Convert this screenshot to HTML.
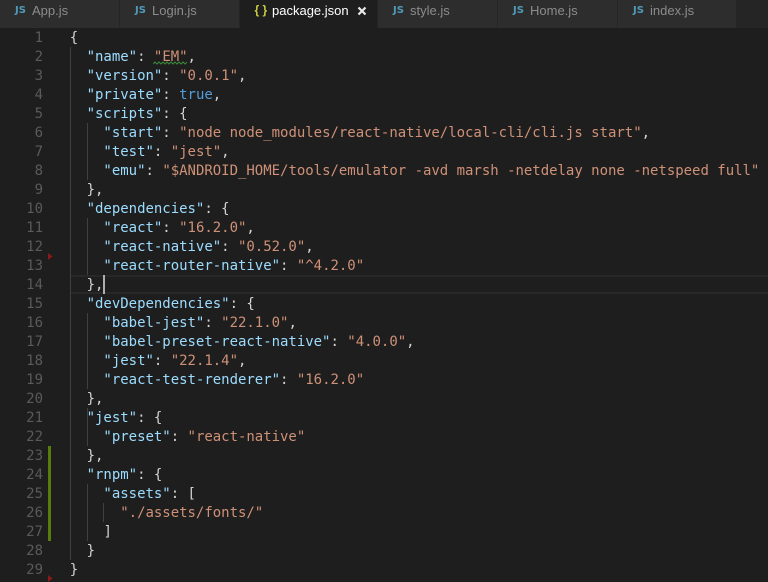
<!DOCTYPE html>
<html><head><meta charset="utf-8"><style>
html,body{margin:0;padding:0;width:768px;height:582px;overflow:hidden;background:#1e1e1e}
#tabs{position:absolute;left:0;top:0;width:768px;height:28px;background:#252526}
.tab{position:absolute;top:0;height:28px;background:#2d2d2d;border-right:1px solid #252526;box-sizing:border-box;color:#8c8c8c;font:13px/22px "Liberation Sans",sans-serif}
.tab.a{background:#1e1e1e;color:#fff}
.tab i{position:absolute;top:0;font:bold 10px/21px "DejaVu Sans",sans-serif;color:#519aba}
.tab b{position:absolute;top:0;font-weight:normal;white-space:nowrap}
#nums{position:absolute;left:0;top:29px;width:43px;text-align:right;font:14px/19px "DejaVu Sans Mono",monospace;color:#5a5a5a;white-space:pre}
#code{position:absolute;left:69.8px;top:29px;font:14px/19px "DejaVu Sans Mono",monospace;letter-spacing:-0.02px;color:#9cdcfe;white-space:pre}
#code s{text-decoration:none;color:#ce9178}
#code u{text-decoration:none;color:#d4d4d4}
#code em{font-style:normal;color:#569cd6}
#code q{quotes:none;color:#d4d4d4}
.g{position:absolute;width:1px;background:#404040}
.ab{position:absolute}
</style></head><body>
<div id="tabs">
<div class="tab" style="left:0;width:120px"><i style="left:15px">JS</i><b style="left:32px">App.js</b></div>
<div class="tab" style="left:120px;width:120px"><i style="left:15px">JS</i><b style="left:32px">Login.js</b></div>
<div class="tab a" style="left:240px;width:138px"><i style="left:14.5px;top:0;color:#cbcb41;font:bold 12px/21px 'Liberation Sans',sans-serif">{ }</i><b style="left:32px">package.json</b>
<svg class="ab" style="left:117px;top:6px" width="10" height="10" viewBox="0 0 10 10"><path d="M1.5 1.5L8.5 8.5M8.5 1.5L1.5 8.5" stroke="#e8e8e8" stroke-width="2.2"/></svg></div>
<div class="tab" style="left:378px;width:120px"><i style="left:15px">JS</i><b style="left:32px">style.js</b></div>
<div class="tab" style="left:498px;width:120px"><i style="left:15px">JS</i><b style="left:32px">Home.js</b></div>
<div class="tab" style="left:618px;width:119px"><i style="left:15px">JS</i><b style="left:32px">index.js</b></div>
</div>
<div class="ab" style="left:70px;top:275px;width:698px;height:19px;box-sizing:border-box;border-top:2px solid #282828;border-bottom:2px solid #282828"></div>
<div class="g" style="left:70px;top:47px;height:513px"></div>
<div class="g" style="left:87px;top:123px;height:57px"></div>
<div class="g" style="left:87px;top:218px;height:57px"></div>
<div class="g" style="left:87px;top:313px;height:76px"></div>
<div class="g" style="left:87px;top:408px;height:38px"></div>
<div class="g" style="left:87px;top:484px;height:57px"></div>
<div class="g" style="left:103px;top:503px;height:19px"></div>
<div class="ab" style="left:103px;top:275px;width:2px;height:19px;background:#aeafad"></div>
<div class="ab" style="left:48px;top:446px;width:3px;height:95px;background:#587c0c"></div>
<svg class="ab" style="left:48px;top:252px" width="5" height="10"><path d="M0 1L4.5 4.5L0 8Z" fill="#8a1a1a"/></svg>
<svg class="ab" style="left:48px;top:574px" width="5" height="8"><path d="M0 1L4.5 4.5L0 8Z" fill="#8a1a1a"/></svg>
<svg class="ab" style="left:153px;top:61px" width="35" height="5" viewBox="0 0 35 5"><path d="M0 3L2 1L4 3L6 1L8 3L10 1L12 3L14 1L16 3L18 1L20 3L22 1L24 3L26 1L28 3L30 1L32 3L34 1" fill="none" stroke="#3a8a3a" stroke-width="1"/></svg>
<div id="nums">1
2
3
4
5
6
7
8
9
10
11
12
13
14
15
16
17
18
19
20
21
22
23
24
25
26
27
28
29</div>
<div id="code"><q>{</q>
  "name"<u>: </u><s>"EM"</s><u>,</u>
  "version"<u>: </u><s>"0.0.1"</s><u>,</u>
  "private"<u>: </u><em>true</em><u>,</u>
  "scripts"<u>: </u><q>{</q>
    "start"<u>: </u><s>"node node_modules/react-native/local-cli/cli.js start"</s><u>,</u>
    "test"<u>: </u><s>"jest"</s><u>,</u>
    "emu"<u>: </u><s>"$ANDROID_HOME/tools/emulator -avd marsh -netdelay none -netspeed full"</s>
  <q>}</q><u>,</u>
  "dependencies"<u>: </u><q>{</q>
    "react"<u>: </u><s>"16.2.0"</s><u>,</u>
    "react-native"<u>: </u><s>"0.52.0"</s><u>,</u>
    "react-router-native"<u>: </u><s>"^4.2.0"</s>
  <q>}</q><u>,</u>
  "devDependencies"<u>: </u><q>{</q>
    "babel-jest"<u>: </u><s>"22.1.0"</s><u>,</u>
    "babel-preset-react-native"<u>: </u><s>"4.0.0"</s><u>,</u>
    "jest"<u>: </u><s>"22.1.4"</s><u>,</u>
    "react-test-renderer"<u>: </u><s>"16.2.0"</s>
  <q>}</q><u>,</u>
  "jest"<u>: </u><q>{</q>
    "preset"<u>: </u><s>"react-native"</s>
  <q>}</q><u>,</u>
  "rnpm"<u>: </u><q>{</q>
    "assets"<u>: </u><q>[</q>
      <s>"./assets/fonts/"</s>
    <q>]</q>
  <q>}</q>
<q>}</q></div>
</body></html>
